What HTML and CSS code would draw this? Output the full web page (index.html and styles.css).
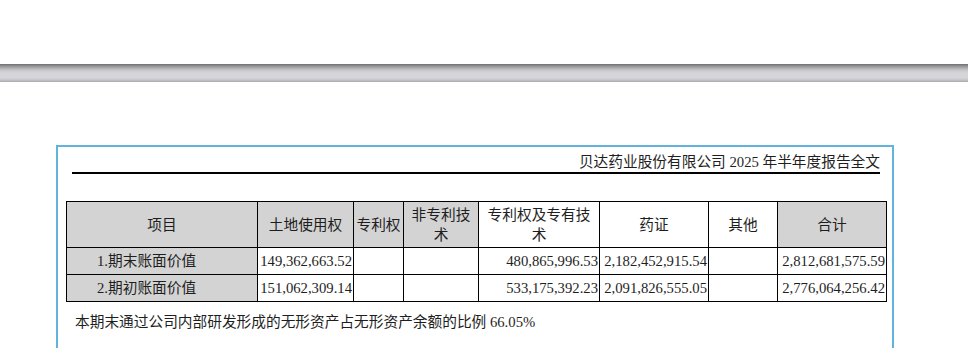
FILE: index.html
```html
<!DOCTYPE html>
<html lang="zh">
<head>
<meta charset="utf-8">
<title>贝达药业股份有限公司 2025 年半年度报告全文</title>
<link rel="stylesheet" href="styles.css">
</head>
<body>
<div class="band"></div>
<div class="page">
  <div class="running-head">贝达药业股份有限公司 2025 年半年度报告全文</div>
  <table class="grid">
    <colgroup>
      <col class="c1"><col class="c2"><col class="c3"><col class="c4">
      <col class="c5"><col class="c6"><col class="c7"><col class="c8">
    </colgroup>
    <tr class="head">
      <td class="shade">项目</td>
      <td class="shade">土地使用权</td>
      <td class="shade">专利权</td>
      <td class="shade">非专利技术</td>
      <td>专利权及专有技术</td>
      <td>药证</td>
      <td>其他</td>
      <td class="shade">合计</td>
    </tr>
    <tr class="row">
      <td class="shade label">1.期末账面价值</td>
      <td class="num">149,362,663.52</td>
      <td></td>
      <td></td>
      <td class="num">480,865,996.53</td>
      <td class="num">2,182,452,915.54</td>
      <td></td>
      <td class="num">2,812,681,575.59</td>
    </tr>
    <tr class="row">
      <td class="shade label">2.期初账面价值</td>
      <td class="num">151,062,309.14</td>
      <td></td>
      <td></td>
      <td class="num">533,175,392.23</td>
      <td class="num">2,091,826,555.05</td>
      <td></td>
      <td class="num">2,776,064,256.42</td>
    </tr>
  </table>
  <p class="note">本期末通过公司内部研发形成的无形资产占无形资产余额的比例 66.05%</p>
</div>
</body>
</html>
```
FILE: styles.css
```css
html, body {
  margin: 0;
  padding: 0;
  background: #fff;
}
body {
  font-family: "Liberation Serif", "Noto Sans CJK SC", serif;
  font-size: 14.7px;
  color: #1e1e1e;
  overflow: hidden;
  height: 348px;
}
.band {
  margin-top: 64px;
  height: 18px;
  background: linear-gradient(#6f6f72 0%, #9c9c9f 15%, #c4c4c8 32%, #d6d6da 50%, #d6d6da 78%, #c2c2c6 90%, #a9a9ad 100%);
}
.page {
  margin: 63px 0 0 56px;
  width: 834px;
  height: 201px;
  border: 2px solid #63b3e1;
  border-bottom: none;
}
.running-head {
  margin: 0 12px 0 14px;
  padding-top: 6px;
  line-height: 19px;
  text-align: right;
  border-bottom: 2px solid #000;
}
.grid {
  margin: 27px 0 0 8px;
  width: 820px;
  table-layout: fixed;
  border-collapse: collapse;
}
.c1 { width: 191px; }
.c2 { width: 96px; }
.c3 { width: 50px; }
.c4 { width: 75px; }
.c5 { width: 121px; }
.c6 { width: 109px; }
.c7 { width: 69px; }
.c8 { width: 109px; }
.grid td {
  border: 1px solid #000;
  padding: 0 1px;
  line-height: 20px;
  white-space: normal;
}
.head td {
  height: 45px;
  text-align: center;
  vertical-align: middle;
  padding: 0 2px;
}
.row td {
  height: 26px;
  padding: 0 1px 0 0;
  vertical-align: middle;
}
.shade {
  background: #d3d3d3;
}
.label {
  text-indent: 30px;
  text-align: left;
}
.num {
  text-align: right;
  white-space: nowrap;
}
.note {
  margin: 10px 0 0 17px;
  line-height: 20px;
}
```
